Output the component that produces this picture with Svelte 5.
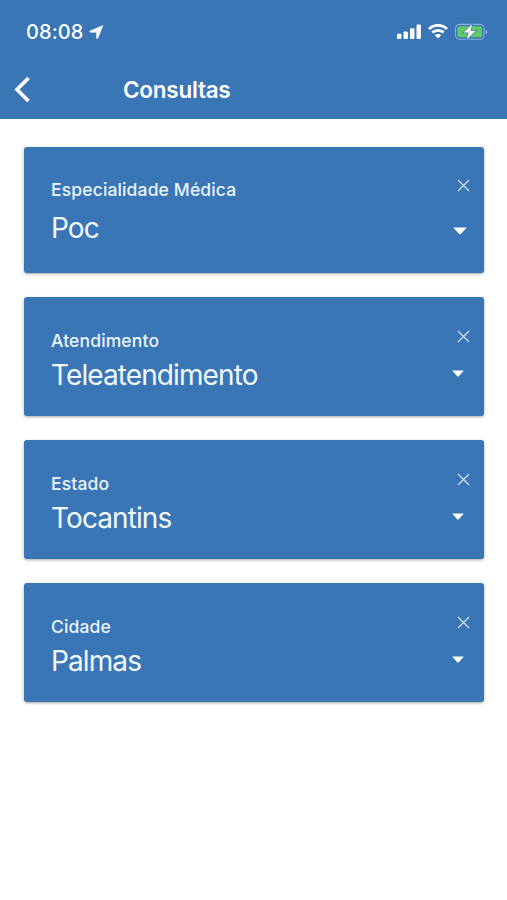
<script lang="ts">
  interface Field {
    id: string;
    label: string;
    value: string;
    /** First field of the form, drawn a little taller. */
    large?: boolean;
  }

  let fields: Field[] = $state([
    {id: 'specialty', label: 'Especialidade Médica', value: 'Poc', large: true},
    {id: 'service', label: 'Atendimento', value: 'Teleatendimento'},
    {id: 'state', label: 'Estado', value: 'Tocantins'},
    {id: 'city', label: 'Cidade', value: 'Palmas'},
  ]);

  function clear(field: Field) {
    field.value = '';
  }
</script>

<div class="screen">
  <header>
    <div class="status">
      <span class="time">08:08</span>
      <svg class="location" width="15" height="14" viewBox="0 0 14 14">
        <path d="M13.4.5 8.3 13.3c-.3.7-1.2.6-1.2-.2V7.3L.9 7.2c-.9 0-1-.9-.2-1.2z" fill="#fff" stroke="#fff" stroke-width=".6" stroke-linejoin="round" />
      </svg>
      <div class="indicators">
        <svg width="24" height="15" viewBox="0 0 24 15">
          <g fill="#fff">
            <rect x="0" y="9.7" width="4.4" height="5.3" rx="1.1" />
            <rect x="6.5" y="7.4" width="4.4" height="7.6" rx="1.1" />
            <rect x="13" y="4.2" width="4.4" height="10.8" rx="1.1" />
            <rect x="19.5" y="0.5" width="4.4" height="14.5" rx="1.1" />
          </g>
        </svg>
        <svg width="20" height="15" viewBox="0 0 20 15">
          <g fill="none" stroke="#fff" stroke-width="2.8">
            <path d="M1 4.9a13 13 0 0 1 18 0" />
            <path d="M4.3 8.6a8.2 8.2 0 0 1 11.4 0" />
          </g>
          <path d="M6.8 11.3a4.6 4.6 0 0 1 6.4 0L10 14.6z" fill="#fff" />
        </svg>
        <svg width="33" height="17" viewBox="0 0 33 17">
          <rect x=".6" y="1.4" width="28.4" height="14.8" rx="4" fill="none" stroke="#8eb1d5" stroke-width="1.1" />
          <path d="M30.5 6.4v5c1-.4 1.7-1.3 1.7-2.5s-.7-2.1-1.7-2.5z" fill="#8eb1d5" />
          <rect x="2.5" y="3.3" width="24.6" height="11" rx="2" fill="#5fcb67" />
          <path d="M17 1.200 8.600 9.600h5l-1.800 6.800 8.900-8.700h-5.100z" fill="#fff" stroke="#3a75b5" stroke-width="1.400" paint-order="stroke" />
        </svg>
      </div>
    </div>
    <div class="toolbar">
      <button class="back" aria-label="Voltar">
        <svg width="17" height="27" viewBox="0 0 17 27">
          <path d="M14.5 2 3 13.5 14.5 25" fill="none" stroke="#fff" stroke-width="3.6" />
        </svg>
      </button>
      <h1>Consultas</h1>
    </div>
  </header>

  <main>
    {#each fields as field (field.id)}
      <section class="card" class:large={field.large}>
        <div class="text">
          <div class="label">{field.label}</div>
          <div class="value">{field.value}</div>
        </div>
        <div class="actions">
          <button class="clear" aria-label="Limpar" onclick={() => clear(field)}>
            <svg width="13" height="13" viewBox="0 0 13 13">
              <path d="M1 1l11 11M12 1 1 12" stroke="#d5e6f7" stroke-width="1.2" />
            </svg>
          </button>
          <svg class="arrow" viewBox="0 0 14 8">
            <path d="M.8.5h12.4q.7 0 .2.6L7.9 7.1q-.9.9-1.8 0L.6 1.1Q.1.5.8.5z" fill="#fff" />
          </svg>
        </div>
      </section>
    {/each}
  </main>
</div>

<style>
  :global(body) {
    background: #fff;
  }
  .screen {
    min-height: 900px;
    color: #fff;
    font-family: Inter, "Liberation Sans", sans-serif;
  }
  button {
    display: block;
    padding: 0;
    border: 0;
    background: none;
  }
  svg {
    display: block;
  }
  header {
    box-sizing: border-box;
    height: 119px;
    background: #3a75b5;
  }
  .status {
    display: flex;
    align-items: center;
    height: 63px;
    padding: 0 19px 0 26px;
  }
  .time {
    font-size: 20px;
    font-weight: 500;
    line-height: 24px;
    letter-spacing: 0.1px;
  }
  .location {
    margin-left: 5px;
  }
  .indicators {
    display: flex;
    align-items: center;
    gap: 7px;
    margin-left: auto;
  }
  .toolbar {
    display: flex;
    align-items: center;
    height: 53px;
    padding-left: 14px;
  }
  .back {
    width: 109px;
  }
  h1 {
    margin: 0;
    font-size: 22.5px;
    font-weight: 600;
    line-height: 30px;
    letter-spacing: -0.25px;
  }
  main {
    display: flex;
    flex-direction: column;
    gap: 24px;
    padding: 28px 23px 0 24px;
  }
  .card {
    display: flex;
    justify-content: space-between;
    box-sizing: border-box;
    height: 119px;
    padding: 32px 14px 0 27px;
    border-radius: 3px;
    background: #3a75b5;
    box-shadow: 0 1px 3px rgba(0, 0, 0, 0.35);
  }
  .label {
    font-size: 17.5px;
    font-weight: 500;
    line-height: 24px;
    letter-spacing: 0.14px;
    color: #e9f5ff;
  }
  .value {
    margin-top: 5px;
    font-size: 28px;
    font-weight: 400;
    line-height: 34px;
    letter-spacing: -0.9px;
    color: #f1f9ff;
  }
  .actions {
    display: flex;
    flex-direction: column;
    align-items: flex-end;
    padding-top: 1px;
  }
  .arrow {
    width: 12px;
    height: 7px;
    margin: 27px 6px 0 0;
  }
  .large {
    height: 126px;
    padding-top: 31px;
  }
  .large .value {
    margin-top: 9px;
  }
  .large .arrow {
    width: 14px;
    height: 8px;
    margin: 34.5px 3.5px 0 0;
  }
</style>
